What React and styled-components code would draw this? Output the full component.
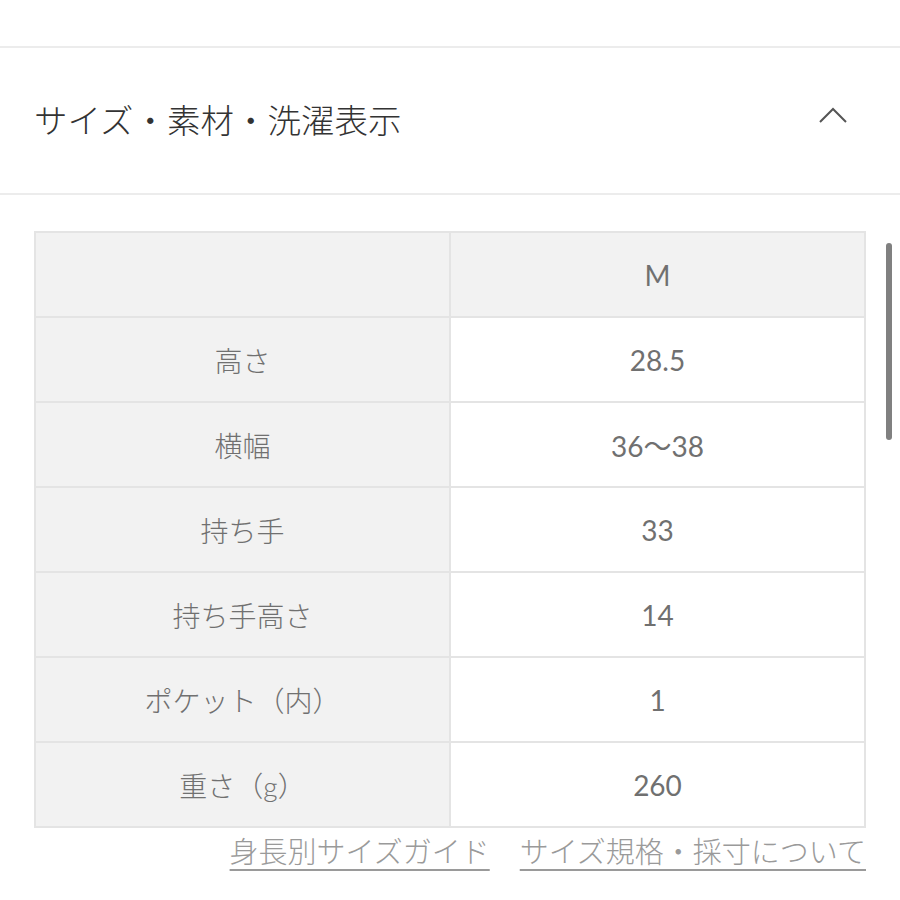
import React from "react";
import styled, { createGlobalStyle } from "styled-components";

const Global = createGlobalStyle`
  html, body { margin: 0; padding: 0; background: #fff; }
  body { font-family: Lato, "Noto Sans CJK JP", sans-serif; }
`;

const Page = styled.div`
  position: relative;
  width: 900px;
  min-height: 900px;
  padding-top: 46px;
  box-sizing: border-box;
`;

const Divider = styled.div`
  height: 2px;
  background: #ececec;
`;

const Header = styled.div`
  height: 145px;
  display: flex;
  align-items: center;
  justify-content: space-between;
  padding: 0 52px 0 34px;
`;

const Title = styled.h2`
  margin: 0 0 4px 0;
  font-family: "Noto Sans CJK JP", sans-serif;
  font-weight: 300;
  font-size: 33.5px;
  color: #333;
`;

const Chevron = styled.svg`
  width: 30px;
  height: 18px;
  margin-top: -12px;
`;

const Content = styled.div`
  padding: 36px 34px 0 34px;
`;

const Table = styled.table`
  width: 100%;
  border-collapse: collapse;
  table-layout: fixed;
  border: 2px solid #e4e4e4;
`;

const Cell = styled.td`
  height: 83px;
  border: 2px solid #e4e4e4;
  text-align: center;
  vertical-align: middle;
  background: ${(p) => (p.$shaded ? "#f2f2f2" : "#fff")};
  color: #707070;
  font-family: Lato, "Noto Sans CJK JP", sans-serif;
  font-weight: ${(p) => (p.$label ? 300 : 400)};
  font-size: 28px;
  padding: 0;
`;

const Links = styled.div`
  display: flex;
  justify-content: flex-end;
  gap: 30px;
  margin-top: 2px;
`;

const Link = styled.a`
  font-family: "Noto Sans CJK JP", sans-serif;
  font-weight: 300;
  font-size: 29px;
  color: #9a9a9a;
  text-decoration: underline;
  text-decoration-thickness: 2px;
  text-underline-offset: 6px;
  line-height: 40px;
`;

const Scrollbar = styled.div`
  position: absolute;
  left: 886px;
  top: 243px;
  width: 6px;
  height: 197px;
  border-radius: 3px;
  background: #808080;
`;

const rows = [
  ["高さ", "28.5"],
  ["横幅", "36〜38"],
  ["持ち手", "33"],
  ["持ち手高さ", "14"],
  ["ポケット（内）", "1"],
  ["重さ（g）", "260"],
];

export default function App() {
  return (
    <Page>
      <Global />
      <Divider />
      <Header>
        <Title>サイズ・素材・洗濯表示</Title>
        <Chevron viewBox="0 0 30 18">
          <polyline
            points="2,16 15,3 28,16"
            fill="none"
            stroke="#555"
            strokeWidth="2"
          />
        </Chevron>
      </Header>
      <Divider />
      <Content>
        <Table>
          <tbody>
            <tr>
              <Cell $shaded></Cell>
              <Cell $shaded>M</Cell>
            </tr>
            {rows.map(([k, v]) => (
              <tr key={k}>
                <Cell $shaded $label>{k}</Cell>
                <Cell>{v}</Cell>
              </tr>
            ))}
          </tbody>
        </Table>
        <Links>
          <Link>身長別サイズガイド</Link>
          <Link>サイズ規格・採寸について</Link>
        </Links>
      </Content>
      <Scrollbar />
    </Page>
  );
}
